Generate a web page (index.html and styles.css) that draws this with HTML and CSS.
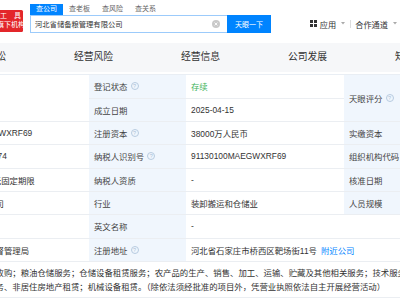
FILE: index.html
```html
<!DOCTYPE html>
<html lang="zh-CN">
<head>
<meta charset="utf-8">
<title>河北省储备粮管理有限公司</title>
<link rel="stylesheet" href="styles.css">
</head>
<body>
<header class="header">
  <div class="logo">
    <div>查询工　具</div>
    <div>国家旗下机构</div>
  </div>
  <div class="search">
    <div class="tabs">
      <span class="tab active">查公司</span>
      <span class="tab">查老板</span>
      <span class="tab">查风险</span>
      <span class="tab">查关系</span>
    </div>
    <div class="search-row">
      <div class="search-input">
        <span>河北省储备粮管理有限公司</span>
        <svg class="clear" viewBox="0 0 8 8" width="8" height="8"><circle cx="4" cy="4" r="4" fill="#c9c9c9"/><path d="M2.6 2.6l2.8 2.8M5.4 2.6l-2.8 2.8" stroke="#fff" stroke-width="0.9"/></svg>
      </div>
      <div class="search-btn">天眼一下</div>
    </div>
  </div>
  <nav class="links">
    <svg class="apps" viewBox="0 0 7 7" width="7" height="7"><rect x="0" y="0" width="3" height="3" fill="#333"/><rect x="4" y="0" width="3" height="3" fill="#333"/><rect x="0" y="4" width="3" height="3" fill="#333"/><rect x="4" y="4" width="3" height="3" fill="#333"/></svg>
    <span class="link">应用</span>
    <svg class="caret" viewBox="0 0 4 3" width="4" height="3"><path d="M0 0h4L2 2.5z" fill="#aaa"/></svg>
    <span class="sep"></span>
    <span class="link">合作通道</span>
    <svg class="caret" viewBox="0 0 4 3" width="4" height="3"><path d="M0 0h4L2 2.5z" fill="#aaa"/></svg>
  </nav>
</header>

<div class="nav">
  <span class="nav-item">基本信息</span>
  <span class="nav-item">法律诉讼</span>
  <span class="nav-item">经营风险</span>
  <span class="nav-item">经营信息</span>
  <span class="nav-item">公司发展</span>
  <span class="nav-item">知识产权</span>
</div>

<div class="info">
  <div class="cell label span-row">法定代表人</div>
  <div class="cell span-row">张三</div>
  <div class="cell label">登记状态<i class="q">?</i></div>
  <div class="cell"><span class="ok">存续</span></div>
  <div class="cell label span-row">天眼评分<i class="q">?</i></div>
  <div class="cell span-row">--</div>

  <div class="cell label">成立日期</div>
  <div class="cell">2025-04-15</div>

  <div class="cell label">统一社会信用代码</div>
  <div class="cell">91130100MAEGWXRF69</div>
  <div class="cell label">注册资本<i class="q">?</i></div>
  <div class="cell">38000万人民币</div>
  <div class="cell label">实缴资本</div>
  <div class="cell">-</div>

  <div class="cell label">工商注册号</div>
  <div class="cell">130100000000074</div>
  <div class="cell label">纳税人识别号<i class="q">?</i></div>
  <div class="cell">91130100MAEGWXRF69</div>
  <div class="cell label">组织机构代码</div>
  <div class="cell">MAEGWXRF6</div>

  <div class="cell label">营业期限</div>
  <div class="cell">2025-04-15 至 无固定期限</div>
  <div class="cell label">纳税人资质</div>
  <div class="cell">-</div>
  <div class="cell label">核准日期</div>
  <div class="cell">2025-04-15</div>

  <div class="cell label">企业类型</div>
  <div class="cell">其他有限责任公司</div>
  <div class="cell label">行业</div>
  <div class="cell">装卸搬运和仓储业</div>
  <div class="cell label">人员规模</div>
  <div class="cell">-</div>

  <div class="cell label">曾用名</div>
  <div class="cell">-</div>
  <div class="cell label">英文名称</div>
  <div class="cell span-col">-</div>

  <div class="cell label">登记机关</div>
  <div class="cell">石家庄市市场监督管理局</div>
  <div class="cell label">注册地址<i class="q">?</i></div>
  <div class="cell span-col">河北省石家庄市桥西区靶场街11号<a class="near" href="#">附近公司</a></div>

  <div class="cell label scope-label">经营范围</div>
  <div class="cell scope">一般项目：粮食收购；粮油仓储服务；仓储设备租赁服务；农产品的生产、销售、加工、运输、贮藏及其他相关服务；技术服务、技术开发、技术咨询、技术交流、技术转让、技术推广；<br>普通货物仓储服务、非居住房地产租赁；机械设备租赁。（除依法须经批准的项目外，凭营业执照依法自主开展经营活动）</div>
</div>
</body>
</html>
```

FILE: styles.css
```css
* {
  box-sizing: border-box;
  margin: 0;
  padding: 0;
}

body {
  width: 400px;
  height: 300px;
  overflow: hidden;
  background: #fff;
  color: #333;
  font-family: "Liberation Sans", "Noto Sans CJK SC", sans-serif;
}

/* header */
.header {
  display: flex;
  align-items: flex-start;
  height: 43px;
  padding-top: 4.3px;
}

.logo {
  width: 40px;
  height: 22.5px;
  margin-left: -17px;
  margin-top: 5.7px;
  padding: 0.9px 2px 0 0;
  background: #e3262a;
  border-radius: 1.5px;
  color: #fff;
  font-size: 7px;
  line-height: 9.6px;
  text-align: right;
  white-space: nowrap;
  overflow: hidden;
}

.search {
  margin-left: 7px;
  width: 241px;
}

.tabs {
  display: flex;
  height: 10.7px;
}

.tab {
  width: 33px;
  font-size: 7px;
  line-height: 10.7px;
  text-align: center;
  color: #666;
}

.tab.active {
  background: #0084ff;
  color: #fff;
}

.search-row {
  display: flex;
  height: 17.7px;
}

.search-input {
  width: 197px;
  display: flex;
  align-items: center;
  justify-content: space-between;
  padding: 0 7.5px 0 4px;
  border: 1px solid #9ccbfb;
  border-right: 0;
  font-size: 7.3px;
  color: #333;
}

.clear {
  display: block;
}

.search-btn {
  width: 44px;
  background: #0084ff;
  color: #fff;
  font-size: 7px;
  display: flex;
  align-items: center;
  justify-content: center;
}

.links {
  margin-left: auto;
  margin-top: 10.7px;
  height: 18px;
  display: flex;
  align-items: center;
  padding-right: 3px;
  font-size: 8.2px;
  color: #333;
}

.apps {
  display: block;
  margin-right: 3px;
}

.caret {
  display: block;
  margin-left: 5px;
}

.sep {
  width: 1px;
  height: 8px;
  background: #ddd;
  margin: 0 4px 0 5px;
}

/* section nav */
.nav {
  display: flex;
  height: 28.7px;
  margin-top: 0.3px;
  margin-left: -174px;
  background: #f6f7f9;
  white-space: nowrap;
}

.nav-item {
  flex: 0 0 107px;
  text-align: center;
  font-size: 9.8px;
  line-height: 28.7px;
  color: #333;
}

/* info table */
.info {
  display: grid;
  grid-template-columns: 97px 157px 97px 158px 97px 157px;
  grid-auto-rows: 23.33px;
  margin-top: 2.3px;
  margin-left: -165px;
  width: 763px;
  border-top: 1px solid #e9eef4;
  font-size: 8.4px;
}

.cell {
  display: flex;
  align-items: center;
  padding: 0 5px;
  border-bottom: 1px solid #ebeef2;
  white-space: nowrap;
  overflow: hidden;
}

.label {
  background: #f0f6fd;
  color: #444;
}

.span-row {
  grid-row: span 2;
}

.span-col {
  grid-column: span 3;
}

.ok {
  color: #3cb35a;
}

.q {
  display: inline-flex;
  align-items: center;
  justify-content: center;
  width: 8px;
  height: 8px;
  margin-left: 3px;
  border: 0.8px solid #b7cbe0;
  border-radius: 50%;
  color: #a9bfd6;
  font-size: 5.5px;
  font-style: normal;
}

.near {
  margin-left: 4px;
  color: #0084ff;
  text-decoration: none;
}

.scope {
  grid-column: 2 / -1;
  display: block;
  padding: 4px 5px;
  line-height: 14px;
}

.info > .scope,
.info > .scope-label {
  height: 36.3px;
}
```
